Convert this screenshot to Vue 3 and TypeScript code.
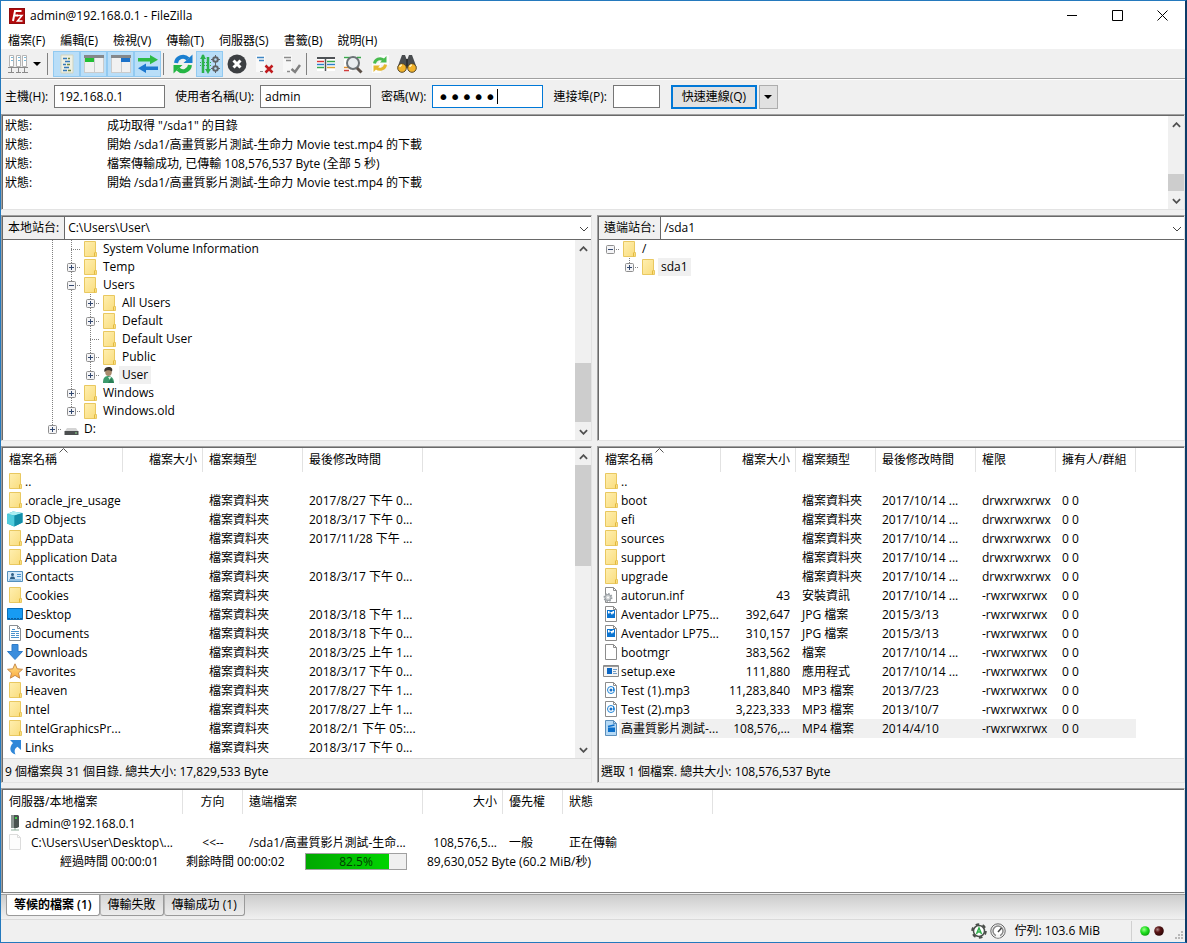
<script setup lang="ts">
import { ref } from 'vue'

interface Column { label: string; width: number; align?: 'right' | 'center'; sorted?: boolean }
interface FileRow { icon: string; cells: string[]; selected?: boolean }
type Guide = 'blank' | 'line' | 'tee' | 'end' | 'root'
interface TreeRow { guides: Guide[]; toggle?: 'plus' | 'minus'; icon: string; label: string; selected?: boolean }

const menus = ['檔案(F)', '編輯(E)', '檢視(V)', '傳輸(T)', '伺服器(S)', '書籤(B)', '說明(H)']

const toolGroups = [
  [
    { icon: 'tb-log', label: '訊息記錄', on: true },
    { icon: 'tb-local', label: '本地目錄樹', on: true },
    { icon: 'tb-remote', label: '遠端目錄樹', on: true },
    { icon: 'tb-queue', label: '傳輸佇列', on: true },
  ],
  [
    { icon: 'tb-refresh', label: '重新整理', on: false },
    { icon: 'tb-process', label: '處理佇列', on: true },
    { icon: 'tb-cancel', label: '取消', on: false },
    { icon: 'tb-disconnect', label: '中斷連線', on: false },
    { icon: 'tb-reconnect', label: '重新連線', on: false },
  ],
  [
    { icon: 'tb-filter', label: '篩選器', on: false },
    { icon: 'tb-compare', label: '目錄比較', on: false },
    { icon: 'tb-sync', label: '同步瀏覽', on: false },
    { icon: 'tb-find', label: '搜尋', on: false },
  ],
]

const host = ref('192.168.0.1')
const user = ref('admin')
const password = ref('admin')
const port = ref('')

const log = [
  '成功取得 "/sda1" 的目錄',
  '開始 /sda1/高畫質影片測試-生命力 Movie test.mp4 的下載',
  '檔案傳輸成功, 已傳輸 108,576,537 Byte (全部 5 秒)',
  '開始 /sda1/高畫質影片測試-生命力 Movie test.mp4 的下載',
]

const localTree: TreeRow[] = [
  { guides: ['line', 'tee'], icon: 'folder', label: 'System Volume Information' },
  { guides: ['line', 'tee'], toggle: 'plus', icon: 'folder', label: 'Temp' },
  { guides: ['line', 'tee'], toggle: 'minus', icon: 'folder', label: 'Users' },
  { guides: ['line', 'line', 'tee'], toggle: 'plus', icon: 'folder', label: 'All Users' },
  { guides: ['line', 'line', 'tee'], toggle: 'plus', icon: 'folder', label: 'Default' },
  { guides: ['line', 'line', 'tee'], icon: 'folder', label: 'Default User' },
  { guides: ['line', 'line', 'tee'], toggle: 'plus', icon: 'folder', label: 'Public' },
  { guides: ['line', 'line', 'end'], toggle: 'plus', icon: 'person', label: 'User', selected: true },
  { guides: ['line', 'tee'], toggle: 'plus', icon: 'folder', label: 'Windows' },
  { guides: ['line', 'end'], toggle: 'plus', icon: 'folder', label: 'Windows.old' },
  { guides: ['end'], toggle: 'plus', icon: 'drive', label: 'D:' },
]
const remoteTree: TreeRow[] = [
  { guides: ['root'], toggle: 'minus', icon: 'folder', label: '/' },
  { guides: ['blank', 'end'], toggle: 'plus', icon: 'folder', label: 'sda1', selected: true },
]

const localColumns: Column[] = [
  { label: '檔案名稱', width: 120, sorted: true },
  { label: '檔案大小', width: 80, align: 'right' },
  { label: '檔案類型', width: 100 },
  { label: '最後修改時間', width: 120 },
]
const dir = '檔案資料夾'
const localFiles: FileRow[] = [
  { icon: 'folder', cells: ['..', '', '', ''] },
  { icon: 'folder', cells: ['.oracle_jre_usage', '', dir, '2017/8/27 下午 0...'] },
  { icon: 'cube', cells: ['3D Objects', '', dir, '2018/3/17 下午 0...'] },
  { icon: 'folder', cells: ['AppData', '', dir, '2017/11/28 下午 ...'] },
  { icon: 'folder', cells: ['Application Data', '', dir, ''] },
  { icon: 'contacts', cells: ['Contacts', '', dir, '2018/3/17 下午 0...'] },
  { icon: 'folder', cells: ['Cookies', '', dir, ''] },
  { icon: 'desktop', cells: ['Desktop', '', dir, '2018/3/18 下午 1...'] },
  { icon: 'document', cells: ['Documents', '', dir, '2018/3/18 下午 0...'] },
  { icon: 'download', cells: ['Downloads', '', dir, '2018/3/25 上午 1...'] },
  { icon: 'star', cells: ['Favorites', '', dir, '2018/3/17 下午 0...'] },
  { icon: 'folder', cells: ['Heaven', '', dir, '2017/8/27 下午 1...'] },
  { icon: 'folder', cells: ['Intel', '', dir, '2017/8/27 上午 1...'] },
  { icon: 'folder', cells: ['IntelGraphicsPr...', '', dir, '2018/2/1 下午 05:...'] },
  { icon: 'link', cells: ['Links', '', dir, '2018/3/17 下午 0...'] },
  { icon: 'folder', cells: ['', '', '', ''] },
]

const remoteColumns: Column[] = [
  { label: '檔案名稱', width: 122, sorted: true },
  { label: '檔案大小', width: 75, align: 'right' },
  { label: '檔案類型', width: 80 },
  { label: '最後修改時間', width: 100 },
  { label: '權限', width: 80 },
  { label: '擁有人/群組', width: 80 },
]
const drwx = 'drwxrwxrwx'
const rwx = '-rwxrwxrwx'
const remoteFiles: FileRow[] = [
  { icon: 'folder', cells: ['..', '', '', '', '', ''] },
  { icon: 'folder', cells: ['boot', '', dir, '2017/10/14 ...', drwx, '0 0'] },
  { icon: 'folder', cells: ['efi', '', dir, '2017/10/14 ...', drwx, '0 0'] },
  { icon: 'folder', cells: ['sources', '', dir, '2017/10/14 ...', drwx, '0 0'] },
  { icon: 'folder', cells: ['support', '', dir, '2017/10/14 ...', drwx, '0 0'] },
  { icon: 'folder', cells: ['upgrade', '', dir, '2017/10/14 ...', drwx, '0 0'] },
  { icon: 'inf', cells: ['autorun.inf', '43', '安裝資訊', '2017/10/14 ...', rwx, '0 0'] },
  { icon: 'jpg', cells: ['Aventador LP75...', '392,647', 'JPG 檔案', '2015/3/13', rwx, '0 0'] },
  { icon: 'jpg', cells: ['Aventador LP75...', '310,157', 'JPG 檔案', '2015/3/13', rwx, '0 0'] },
  { icon: 'file', cells: ['bootmgr', '383,562', '檔案', '2017/10/14 ...', rwx, '0 0'] },
  { icon: 'exe', cells: ['setup.exe', '111,880', '應用程式', '2017/10/14 ...', rwx, '0 0'] },
  { icon: 'mp3', cells: ['Test (1).mp3', '11,283,840', 'MP3 檔案', '2013/7/23', rwx, '0 0'] },
  { icon: 'mp3', cells: ['Test (2).mp3', '3,223,333', 'MP3 檔案', '2013/10/7', rwx, '0 0'] },
  { icon: 'mp4', cells: ['高畫質影片測試-...', '108,576,...', 'MP4 檔案', '2014/4/10', rwx, '0 0'], selected: true },
]

const sites = [
  {
    id: 'local', title: '本地站台:', path: 'C:\\Users\\User\\', tree: localTree, scroll: true,
    columns: localColumns, files: localFiles, status: '9 個檔案與 31 個目錄. 總共大小: 17,829,533 Byte',
  },
  {
    id: 'remote', title: '遠端站台:', path: '/sda1', tree: remoteTree, scroll: false,
    columns: remoteColumns, files: remoteFiles, status: '選取 1 個檔案. 總共大小: 108,576,537 Byte',
  },
]

const queueColumns: Column[] = [
  { label: '伺服器/本地檔案', width: 180 },
  { label: '方向', width: 60, align: 'center' },
  { label: '遠端檔案', width: 180 },
  { label: '大小', width: 80, align: 'right' },
  { label: '優先權', width: 60 },
  { label: '狀態', width: 150 },
]
const progress = 82.5
const tabs = ['等候的檔案 (1)', '傳輸失敗', '傳輸成功 (1)']
const activeTab = ref(0)
</script>

<template>
  <svg class="sprite" aria-hidden="true">
    <defs>
      <linearGradient id="g-folder" x1="0" y1="0" x2="1" y2="1">
        <stop offset="0" stop-color="#ffefb0" /><stop offset="1" stop-color="#f9dc7c" />
      </linearGradient>
      <linearGradient id="g-star" x1="0" y1="0" x2="0" y2="1">
        <stop offset="0" stop-color="#ffe28a" /><stop offset="1" stop-color="#fba93c" />
      </linearGradient>
      <radialGradient id="g-green" cx=".4" cy=".35" r=".7">
        <stop offset="0" stop-color="#9cff8c" /><stop offset=".5" stop-color="#1fe01f" /><stop offset="1" stop-color="#0a9a0a" />
      </radialGradient>
      <radialGradient id="g-red" cx=".35" cy=".35" r=".7">
        <stop offset="0" stop-color="#b08888" /><stop offset=".4" stop-color="#5a1414" /><stop offset="1" stop-color="#2a0505" />
      </radialGradient>
    </defs>
    <symbol id="folder" viewBox="0 0 16 16">
      <path d="M2.500.5h11v11h1v4h-12z" fill="url(#g-folder)" stroke="#e9c860" />
      <path d="M12.500 15.500v-3.500l1-1" fill="none" stroke="#e3b93e" />
    </symbol>
    <symbol id="person" viewBox="0 0 16 16">
      <path d="M2 16c0-4 1-7 5-7s6 3 6 7z" fill="#3c9a6c" />
      <path d="M7 10l2 3 1-3z" fill="#dff0e6" />
      <path d="M7 16l3-5 3 5z" fill="#2b7f57" />
      <ellipse cx="7.500" cy="5" rx="3.300" ry="4" fill="#a98a6c" />
      <path d="M3.500 5C2.500 1 5.500 0 8 0s4 1.500 3 4.500C9 3 7 3 5.500 3.500z" fill="#3a342e" />
    </symbol>
    <symbol id="drive" viewBox="0 0 16 16">
      <path d="M4 7h9l2 3H2z" fill="#d4d4d4" />
      <path d="M1.500 10h14v4h-14z" fill="#4c4f50" />
      <path d="M12 12h2" stroke="#8fe08f" />
    </symbol>
    <symbol id="cube" viewBox="0 0 16 16">
      <path d="M0 3l6-2.500L15.500 2v9.500L7 15.500 0 12.500z" fill="#1aa5bd" />
      <path d="M0 3l6-2.500L15.500 2 7.500 4.500z" fill="#a9eef2" />
      <path d="M0 3l7.500 1.500v11L0 12.500z" fill="#4fcbdc" />
      <path d="M7.500 4.500L15.500 2v9.500l-8 4z" fill="#128da8" />
    </symbol>
    <symbol id="contacts" viewBox="0 0 16 16">
      <path d="M.5 3.500h15v10H.5z" fill="#d5eafa" stroke="#5490bd" />
      <path d="M3 11c0-2 1-2.500 2.500-2.500S8 9 8 11z" fill="#2f5f86" />
      <circle cx="5.500" cy="6.500" r="1.500" fill="#2f5f86" />
      <path d="M10 6.500h4M10 8.500h4M2 12h12" stroke="#4b93cc" />
    </symbol>
    <symbol id="desktop" viewBox="0 0 16 16">
      <path d="M.5 2.500h15v11H.5z" fill="#179bf3" stroke="#0b6fb8" />
      <path d="M1 12.500h14" stroke="#0c5c9c" stroke-dasharray="2 1" />
    </symbol>
    <symbol id="document" viewBox="0 0 16 16">
      <path d="M2.500.5h8l3 3v12h-11z" fill="#fff" stroke="#8a8f94" />
      <path d="M5 4.500h3M4 6.500h8M4 8.500h4M9 8.500h3M4 10.500h4M9 10.500h3M4 12.500h8" stroke="#4a92cc" />
      <path d="M10.500.5v3h3" fill="none" stroke="#8a8f94" />
    </symbol>
    <symbol id="download" viewBox="0 0 16 16">
      <path d="M5 .5h6v7h4.500L8 15.500.5 7.500H5z" fill="#3b8ddd" stroke="#2f7cc9" />
    </symbol>
    <symbol id="star" viewBox="0 0 16 16">
      <path d="M8 .8l2.200 5 5.300.5-4 3.600 1.200 5.300L8 12.400l-4.700 2.800 1.200-5.300-4-3.600 5.300-.5z" fill="url(#g-star)" stroke="#c98a4a" />
    </symbol>
    <symbol id="link" viewBox="0 0 16 16">
      <path d="M3 1h11v10l-3.500-3.200C7.500 9.500 7 12 8.500 15.500 3 14 1.500 9 6 4z" fill="#2f87d8" />
    </symbol>
    <symbol id="file" viewBox="0 0 16 16">
      <path d="M2.500.5h8l3 3v12h-11z" fill="#fff" stroke="#8c8c8c" />
      <path d="M10.500.5v3h3" fill="none" stroke="#8c8c8c" />
    </symbol>
    <symbol id="file-light" viewBox="0 0 16 16">
      <path d="M2.500.5h8l3 3v12h-11z" fill="#fdfdfd" stroke="#dcdcdc" />
      <path d="M10.500.5v3h3" fill="none" stroke="#dcdcdc" />
    </symbol>
    <symbol id="inf" viewBox="0 0 16 16">
      <use href="#file" />
      <circle cx="5" cy="10.500" r="3.500" fill="#d8dbdd" stroke="#9aa0a4" stroke-width="2" stroke-dasharray="1.500 1.200" />
      <circle cx="5" cy="10.500" r="3" fill="#d0d3d5" stroke="#9aa0a4" />
      <circle cx="5" cy="10.500" r="1" fill="#fff" />
    </symbol>
    <symbol id="jpg" viewBox="0 0 16 16">
      <use href="#file" />
      <path d="M4 4h8v8H4z" fill="#0b74d1" />
      <path d="M5 5h6v3l-1-1-1 2-2-3-1 2-1-1z" fill="#fff" />
      <path d="M6.500 5.500h3" stroke="#0b74d1" />
    </symbol>
    <symbol id="exe" viewBox="0 0 16 16">
      <path d="M.5 2.500h15v11H.5z" fill="#f4f4f4" stroke="#8a8a8a" />
      <path d="M1 3.500h14" stroke="#9a9a9a" />
      <path d="M4 5h5v6H4z" fill="#0b66c3" />
      <path d="M10 6.500h4M10 8.500h3M10 10.500h4" stroke="#6f9cc8" />
    </symbol>
    <symbol id="mp3" viewBox="0 0 16 16">
      <use href="#file" />
      <circle cx="8" cy="8" r="3.500" fill="none" stroke="#1c83d8" />
      <circle cx="8" cy="8" r="1.500" fill="#1c6fc4" />
      <path d="M10.500 5v4" stroke="#1c83d8" />
    </symbol>
    <symbol id="mp4" viewBox="0 0 16 16">
      <path d="M2.500.5h8l3 3v12h-11z" fill="#b5d9f5" stroke="#5d8fba" />
      <path d="M10.500.5v3h3" fill="none" stroke="#5d8fba" />
      <path d="M5 7.500h7V12H5z" fill="#0b6fcb" />
      <path d="M5 6.500l6.500-1.500" stroke="#0b6fcb" stroke-width="1.500" />
    </symbol>
    <symbol id="server" viewBox="0 0 16 16">
      <path d="M4 0h7l1 1v11l-2 1H4z" fill="#4a5350" />
      <path d="M4 0h3v13H4z" fill="#8b9591" />
      <path d="M8 2h2v2H8z" fill="#44d04c" />
      <path d="M8 13v2M4 15h8" stroke="#8fae9b" />
    </symbol>
    <symbol id="plus" viewBox="0 0 9 9">
      <rect x=".5" y=".5" width="8" height="8" rx="1" fill="#f4f4f6" stroke="#8f8f8f" />
      <path d="M2 4.500h5M4.500 2v5" stroke="#32486f" />
    </symbol>
    <symbol id="minus" viewBox="0 0 9 9">
      <rect x=".5" y=".5" width="8" height="8" rx="1" fill="#f4f4f6" stroke="#8f8f8f" />
      <path d="M2 4.500h5" stroke="#32486f" />
    </symbol>
    <symbol id="up" viewBox="0 0 10 6"><path d="M1 5l4-4 4 4" fill="none" stroke="#505050" stroke-width="2" /></symbol>
    <symbol id="down" viewBox="0 0 10 6"><path d="M1 1l4 4 4-4" fill="none" stroke="#505050" stroke-width="2" /></symbol>

    <symbol id="tb-sites" viewBox="0 0 20 20">
      <g fill="#fff" stroke="#b4b4b4"><path d="M1.500 1.500h4v11h-4zM8.500 1.500h4v11h-4zM14.500 1.500h4v11h-4z" /></g>
      <path d="M3 3.500h2M10 3.500h2M16 3.500h2M3 6.500h2M10 6.500h2M16 6.500h2" stroke="#7ab8d8" />
      <path d="M0 13.500h20M3.500 13v5M10.500 13v5M16.500 13v5M0 18.500h6M8 18.500h5M14 18.500h6" stroke="#8a8a8a" />
    </symbol>
    <symbol id="tb-log" viewBox="0 0 20 20">
      <path d="M4 1h12v18H4z" fill="#eef0e4" stroke="#d0d4c0" />
      <path d="M6 4.500h4M8 7.500h5M6 10.500h3M7 13.500h5M6 16.500h4" stroke="#3579b8" stroke-width="1.500" />
      <path d="M11 4.500h2M10 10.500h3M11 16.500h3" stroke="#6f8a40" stroke-width="1.500" />
    </symbol>
    <symbol id="tb-local" viewBox="0 0 20 20">
      <path d="M0 1h20v18H0z" fill="#f1f1f1" /><path d="M0 1h20v3H0z" fill="#85888b" />
      <path d="M0 4h10v4H0z" fill="#22bf35" /><path d="M10.500 4v15M.5 4v15M19.500 4v15M0 18.500h20" stroke="#c9cbcc" />
    </symbol>
    <symbol id="tb-remote" viewBox="0 0 20 20">
      <path d="M0 1h20v18H0z" fill="#f1f1f1" /><path d="M0 1h20v3H0z" fill="#85888b" />
      <path d="M10 4h10v4H10z" fill="#1c72c9" /><path d="M10.500 8v11M.5 4v15M19.500 4v15M0 18.500h20" stroke="#c9cbcc" />
    </symbol>
    <symbol id="tb-queue" viewBox="0 0 20 20">
      <path d="M0 4h12V1l8 4.800-8 4.500V7.500H0z" fill="#2dbb45" />
      <path d="M20 12.500H8v-3L0 14.300l8 4.700v-3h12z" fill="#1d78d0" />
    </symbol>
    <symbol id="tb-refresh" viewBox="0 0 20 20">
      <path d="M3 9a7 7 0 0 1 12-4" fill="none" stroke="#1b7fd0" stroke-width="4" />
      <path d="M10.500 9h9V.5z" fill="#1b7fd0" />
      <path d="M17 11a7 7 0 0 1-12 4" fill="none" stroke="#25b645" stroke-width="4" />
      <path d="M9.500 11h-9v8.500z" fill="#25b645" />
    </symbol>
    <symbol id="tb-process" viewBox="0 0 20 20">
      <path d="M3 1v18M8 3v14" stroke="#2bb24c" stroke-width="2.500" />
      <path d="M0 5l3-5 3 5zM5 15l3 5 3-5z" fill="#2bb24c" />
      <path d="M0 8.500h11M0 11.500h11" stroke="#2bb24c" stroke-dasharray="1 1" />
      <g fill="none" stroke="#606468"><circle cx="15.500" cy="5.500" r="2.300" stroke-width="2" /><circle cx="15.500" cy="14.500" r="2.300" stroke-width="2" /><path d="M15.500 1v2M15.500 8v2M11 5.500h2M18 5.500h2M15.500 10v2M15.500 17v2M11 14.500h2M18 14.500h2" /></g>
    </symbol>
    <symbol id="tb-cancel" viewBox="0 0 20 20">
      <circle cx="10" cy="10" r="9.500" fill="#3c3f42" />
      <path d="M6.500 6.500l7 7M13.500 6.500l-7 7" stroke="#fff" stroke-width="3" />
    </symbol>
    <symbol id="tb-disconnect" viewBox="0 0 20 20">
      <path d="M2 1h9v17H2z" fill="#f9f9f9" />
      <path d="M3 3.500h7M5 6.500h5" stroke="#3f86c4" stroke-width="1.500" /><path d="M6 17.500h3" stroke="#8a8a8a" />
      <path d="M11.500 11.500l7 7M18.500 11.500l-7 7" stroke="#c01a1e" stroke-width="2.500" />
    </symbol>
    <symbol id="tb-reconnect" viewBox="0 0 20 20">
      <path d="M2 1h9v17H2z" fill="#f7f7f7" />
      <path d="M3 3.500h7M5 6.500h5M6 17.500h3" stroke="#8b8b8b" stroke-width="1.500" />
      <path d="M10.500 15l3.500 3 5-7" fill="none" stroke="#808080" stroke-width="2.500" />
    </symbol>
    <symbol id="tb-filter" viewBox="0 0 20 20">
      <path d="M1 3h18v14H1z" fill="#fff" /><path d="M1 3h18v2H1z" fill="#4e5256" />
      <path d="M1 7.500h7" stroke="#d93434" stroke-width="1.500" /><path d="M1 10.500h7M11 10.500h8" stroke="#2f7fc9" stroke-width="1.500" />
      <path d="M1 13.500h7M11 7.500h8" stroke="#3aa84c" stroke-width="1.500" /><path d="M11 13.500h8" stroke="#d9a334" stroke-width="1.500" />
      <path d="M9.500 3v14" stroke="#4e5256" stroke-width="1.500" />
    </symbol>
    <symbol id="tb-compare" viewBox="0 0 20 20">
      <path d="M1 2h8v15H1z" fill="#fff" /><path d="M1 3.500h6M14 3.500h4" stroke="#3aa84c" stroke-width="1.500" />
      <path d="M1 13.500h6" stroke="#e2902d" stroke-width="1.500" /><path d="M1 16.500h5" stroke="#d23c3c" stroke-width="1.500" />
      <circle cx="10" cy="9" r="6" fill="#e9edf0" stroke="#6d7377" stroke-width="2" />
      <path d="M14 14l4.500 4.500" stroke="#5b5048" stroke-width="3" />
    </symbol>
    <symbol id="tb-sync" viewBox="0 0 20 20">
      <path d="M9 1h10v10H9zM2 9h9v10H2z" fill="#fbfbfb" />
      <path d="M4.500 9.500a5.500 5.500 0 0 1 9-3.500" fill="none" stroke="#48bb4e" stroke-width="3" /><path d="M10 8.500h6.500V2z" fill="#48bb4e" />
      <path d="M15.500 10.500a5.500 5.500 0 0 1-9 3.500" fill="none" stroke="#e5b72d" stroke-width="3" /><path d="M10 11.500H3.500V18z" fill="#e5b72d" />
    </symbol>
    <symbol id="tb-find" viewBox="0 0 20 20">
      <path d="M5 1h3l1.500 4h1L12 1h3l4.500 12H.5z" fill="#4a4d50" />
      <path d="M9 5h2v9H9z" fill="#2e3032" />
      <circle cx="5" cy="14" r="4.300" fill="#f2b32b" stroke="#5a4a2a" /><circle cx="15" cy="14" r="4.300" fill="#f2b32b" stroke="#5a4a2a" />
      <path d="M3 13a2 2 0 0 1 2-2M13 13a2 2 0 0 1 2-2" fill="none" stroke="#fff2b8" stroke-width="1.500" />
    </symbol>
  </svg>

  <main class="window">
    <header class="titlebar">
      <svg class="logo" viewBox="0 0 16 16" aria-hidden="true">
        <path d="M0 0h16v16H0z" fill="#b30a0c" />
        <path d="M.5.500h15v15H.5z" fill="none" stroke="#6d0f10" stroke-dasharray="1 1" />
        <path d="M4 13L6 3h6.500M5 7.500h4" fill="none" stroke="#fff" stroke-width="2" />
        <path d="M8 7.500h5L8.500 13h5" fill="none" stroke="#fff" stroke-width="1.500" />
      </svg>
      <h1>admin@192.168.0.1 - FileZilla</h1>
      <div class="captions">
        <button type="button" aria-label="最小化"><svg viewBox="0 0 11 11"><path d="M0 5.500h10" stroke="#000" /></svg></button>
        <button type="button" aria-label="最大化"><svg viewBox="0 0 11 11"><path d="M.5.500h10v10H.5z" fill="none" stroke="#000" /></svg></button>
        <button type="button" aria-label="關閉"><svg viewBox="0 0 11 11"><path d="M.5.500l10 10M10.500.500l-10 10" stroke="#000" /></svg></button>
      </div>
    </header>

    <nav class="menubar">
      <button v-for="m in menus" :key="m" type="button">{{ m }}</button>
    </nav>

    <div class="toolbar">
      <button type="button" class="tool" aria-label="站台管理員"><svg><use href="#tb-sites" /></svg></button>
      <button type="button" class="tool-more" aria-label="站台清單"><svg viewBox="0 0 8 4"><path d="M0 0h8L4 4z" /></svg></button>
      <template v-for="(group, g) in toolGroups" :key="g">
        <span class="tool-sep"></span>
        <button v-for="t in group" :key="t.icon" type="button" class="tool" :class="{ on: t.on }" :aria-label="t.label" :aria-pressed="t.on">
          <svg><use :href="'#' + t.icon" /></svg>
        </button>
      </template>
    </div>

    <form class="quick" @submit.prevent>
      <label for="host">主機(H):</label>
      <input id="host" v-model="host" type="text">
      <label for="user">使用者名稱(U):</label>
      <input id="user" v-model="user" type="text">
      <label for="pass">密碼(W):</label>
      <span class="pass"><input id="pass" v-model="password" type="password"><i class="caret"></i></span>
      <label for="port">連接埠(P):</label>
      <input id="port" v-model="port" class="port" type="text">
      <button type="submit" class="connect">快速連線(Q)</button>
      <button type="button" class="history" aria-label="連線記錄"><svg viewBox="0 0 8 4"><path d="M0 0h8L4 4z" /></svg></button>
    </form>

    <div class="panes">
      <section class="pane log" aria-label="訊息記錄">
        <dl>
          <div v-for="(line, i) in log" :key="i"><dt>狀態:</dt><dd>{{ line }}</dd></div>
        </dl>
        <div class="scroll scroll-log"><svg><use href="#up" /></svg><i class="before"></i><b></b><i class="after"></i><svg><use href="#down" /></svg></div>
      </section>

      <div class="split">
        <section v-for="s in sites" :key="s.id" class="pane site">
          <div class="path">
            <label :for="s.id + '-path'">{{ s.title }}</label>
            <select :id="s.id + '-path'"><option>{{ s.path }}</option></select>
            <svg viewBox="0 0 10 6" aria-hidden="true"><path d="M1 1l4 4 4-4" fill="none" stroke="#444" /></svg>
          </div>
          <div class="tree-area">
            <ul class="tree" :class="s.id">
              <li v-for="row in s.tree" :key="row.label">
                <span v-for="(kind, k) in row.guides" :key="k" class="guide" :class="kind">
                  <button v-if="row.toggle && k === row.guides.length - 1" type="button" :aria-label="row.label">
                    <svg><use :href="'#' + row.toggle" /></svg>
                  </button>
                </span>
                <svg class="icon"><use :href="'#' + row.icon" /></svg>
                <span class="node" :class="{ selected: row.selected }">{{ row.label }}</span>
              </li>
            </ul>
            <div v-if="s.scroll" class="scroll scroll-tree"><svg><use href="#up" /></svg><i class="before"></i><b></b><i class="after"></i><svg><use href="#down" /></svg></div>
          </div>
        </section>
      </div>

      <div class="split">
        <section v-for="s in sites" :key="s.id" class="pane listing">
          <div class="list-area">
            <div class="list-clip">
              <table>
                <colgroup><col v-for="c in s.columns" :key="c.label" :style="{ width: c.width + 'px' }"></colgroup>
                <thead>
                  <tr>
                    <th v-for="c in s.columns" :key="c.label" :class="c.align" scope="col">
                      {{ c.label }}<svg v-if="c.sorted" class="sort" viewBox="0 0 9 5"><path d="M.5 4.500l4-4 4 4" fill="none" stroke="#555" /></svg>
                    </th>
                  </tr>
                </thead>
                <tbody>
                  <tr v-for="(f, i) in s.files" :key="i" :class="{ selected: f.selected }">
                    <td v-for="(c, k) in f.cells" :key="k" :class="[s.columns[k].align, { name: k === 0 }]">
                      <template v-if="k === 0"><svg class="icon"><use :href="'#' + f.icon" /></svg><span>{{ c }}</span></template>
                      <template v-else>{{ c }}</template>
                    </td>
                  </tr>
                </tbody>
              </table>
            </div>
            <div v-if="s.scroll" class="scroll scroll-list"><svg><use href="#up" /></svg><i class="before"></i><b></b><i class="after"></i><svg><use href="#down" /></svg></div>
          </div>
          <p class="summary">{{ s.status }}</p>
        </section>
      </div>

      <section class="pane queue" aria-label="傳輸佇列">
        <table>
          <colgroup><col v-for="c in queueColumns" :key="c.label" :style="{ width: c.width + 'px' }"></colgroup>
          <thead>
            <tr><th v-for="c in queueColumns" :key="c.label" :class="c.align" scope="col">{{ c.label }}</th></tr>
          </thead>
          <tbody>
            <tr>
              <td class="name" colspan="6"><svg class="icon"><use href="#server" /></svg><span>admin@192.168.0.1</span></td>
            </tr>
            <tr>
              <td class="name child"><svg class="icon"><use href="#file-light" /></svg><span>C:\Users\User\Desktop\...</span></td>
              <td class="center">&lt;&lt;--</td>
              <td>/sda1/高畫質影片測試-生命...</td>
              <td class="right">108,576,5...</td>
              <td>一般</td>
              <td>正在傳輸</td>
            </tr>
            <tr>
              <td class="transfer" colspan="6">
                <div>
                  <span class="elapsed">經過時間 00:00:01</span>
                  <span class="remaining">剩餘時間 00:00:02</span>
                  <span class="meter" role="progressbar" :aria-valuenow="progress"><i :style="{ width: progress + '%' }"></i><em>{{ progress }}%</em></span>
                  <span>89,630,052 Byte (60.2 MiB/秒)</span>
                </div>
              </td>
            </tr>
          </tbody>
        </table>
      </section>
    </div>

    <div class="tabs" role="tablist">
      <button v-for="(t, i) in tabs" :key="t" type="button" role="tab" :aria-selected="i === activeTab" :class="{ active: i === activeTab }" @click="activeTab = i">{{ t }}</button>
    </div>

    <footer class="statusbar">
      <svg class="badge" viewBox="0 0 16 16" aria-hidden="true">
        <circle cx="8" cy="8" r="6.800" fill="none" stroke="#4b4f4b" stroke-width="2" stroke-dasharray="3.560 3.560" />
        <circle cx="8" cy="8" r="5.500" fill="#fff" stroke="#4b4f4b" stroke-width="1.500" />
        <path d="M5.500 11L8 5l2.500 6M6.500 9h3" fill="none" stroke="#2fae4a" stroke-width="1.500" />
      </svg>
      <svg class="badge" viewBox="0 0 16 16" aria-hidden="true">
        <circle cx="8" cy="8" r="7.200" fill="#f4f4f4" stroke="#666" />
        <circle cx="8" cy="8" r="5" fill="#fff" stroke="#888" stroke-width="1.500" />
        <path d="M8 9l3.500-4" stroke="#444" stroke-width="1.500" /><path d="M6 13h4" stroke="#f4f4f4" stroke-width="3" />
      </svg>
      <span class="queue-size">佇列: 103.6 MiB</span>
      <span class="lights">
        <svg viewBox="0 0 10 10"><circle cx="5" cy="5" r="4.800" fill="url(#g-green)" /></svg>
        <svg viewBox="0 0 10 10"><circle cx="5" cy="5" r="4.800" fill="url(#g-red)" /></svg>
      </span>
      <svg class="grip" viewBox="0 0 9 9" aria-hidden="true">
        <path d="M6 0h2v2H6zM3 3h2v2H3zM6 3h2v2H6zM0 6h2v2H0zM3 6h2v2H3zM6 6h2v2H6z" fill="#b8b8b8" />
      </svg>
    </footer>
  </main>
</template>

<style>
body {
  margin: 0;
}
</style>

<style scoped>
.sprite {
  position: absolute;
  width: 0;
  height: 0;
}
.window {
  box-sizing: border-box;
  height: 100vh;
  display: flex;
  flex-direction: column;
  overflow: hidden;
  border: 1px solid #2479bd;
  border-right: 2px solid #0d3c69;
  background: #f0f0f0;
  color: #000;
  font: 12px/18px "Open Sans", "Noto Sans CJK TC", sans-serif;
}
button,
input,
select {
  box-sizing: border-box;
  margin: 0;
  padding: 0;
  border: 0;
  border-radius: 0;
  background: none;
  color: inherit;
  font: inherit;
}
h1,
p,
dl,
dd,
ul {
  margin: 0;
  padding: 0;
  font: inherit;
}
svg {
  display: block;
  flex: none;
}
.icon {
  width: 16px;
  height: 16px;
}

.titlebar {
  flex: none;
  height: 29px;
  display: flex;
  align-items: center;
  background: #fff;
}
.logo {
  width: 16px;
  height: 16px;
  margin: 0 5px 0 8px;
}
.captions {
  display: flex;
  margin-left: auto;
}
.captions button {
  width: 45px;
  height: 29px;
  display: grid;
  place-items: center;
}
.captions svg {
  width: 11px;
  height: 11px;
}

.menubar {
  flex: none;
  box-sizing: border-box;
  height: 19px;
  display: flex;
  gap: 15px;
  padding: 2px 0 0 7px;
  background: #fff;
}

.toolbar {
  flex: none;
  height: 29px;
  display: flex;
  align-items: center;
  padding-left: 3px;
  border-bottom: 1px solid #a0a0a0;
  box-shadow: 0 1px 0 #fff;
}
.tool {
  width: 27px;
  height: 26px;
  display: grid;
  place-items: center;
}
.tool svg {
  width: 20px;
  height: 20px;
}
.tool.on {
  background: #b9def8;
  border: 1px solid #92caf1;
}
.tool-more {
  width: 12px;
  height: 26px;
  display: grid;
  place-items: center;
}
.tool-more svg,
.history svg {
  width: 8px;
  height: 4px;
}
.tool-sep {
  width: 1px;
  height: 22px;
  margin: 0 5px 0 2px;
  background: #808080;
}
.tool-more + .tool-sep {
  margin: 0 5px 0 4px;
}

.quick {
  flex: none;
  height: 35px;
  display: flex;
  align-items: center;
  padding-left: 4px;
}
.quick label {
  margin-right: 6px;
}
.quick input {
  width: 111px;
  height: 23px;
  margin-right: 10px;
  padding: 0 4px;
  border: 1px solid #767676;
  background: #fff;
}
.quick .port {
  width: 47px;
  margin-right: 11px;
}
.pass {
  position: relative;
}
.quick .pass input {
  display: block;
  border: 1px solid #0078d7;
  font: 20px/20px "DejaVu Sans", sans-serif;
}
.caret {
  position: absolute;
  top: 4px;
  left: 65px;
  width: 1px;
  height: 15px;
  background: #000;
}
.connect {
  width: 86px;
  height: 24px;
}
.quick .connect {
  border: 2px solid #0078d7;
  background: #e1e1e1;
}
.quick .history {
  width: 19px;
  height: 24px;
  display: grid;
  place-items: center;
  margin-left: 2px;
  border: 1px solid #adadad;
  background: #e1e1e1;
}

.panes {
  flex: 1;
  min-height: 0;
  display: grid;
  gap: 5px;
  grid-template-rows: minmax(0, 96fr) minmax(0, 226fr) minmax(0, 337fr) minmax(0, 105fr);
}
.split {
  display: grid;
  gap: 5px;
  grid-template-columns: minmax(0, 591fr) minmax(0, 588fr);
  min-height: 0;
}
.pane {
  box-sizing: border-box;
  min-height: 0;
  overflow: hidden;
  display: flex;
  flex-direction: column;
  padding: 1px 0 0 1px;
  border: 1px solid #a0a0a0;
  border-right-color: #e3e3e3;
  border-bottom-color: #e3e3e3;
  background: #fff;
  box-shadow: inset 1px 1px 0 #696969;
}
.log {
  flex-direction: row;
  line-height: 19px;
}
.log dl {
  flex: 1;
  padding-left: 2px;
}
.log dl div {
  display: flex;
}
.log dt {
  width: 102px;
}

.scroll {
  flex: none;
  width: 16px;
  display: flex;
  flex-direction: column;
  align-items: center;
  background: #f0f0f0;
}
.scroll svg {
  width: 9px;
  height: 6px;
  margin: 6px 0 5px;
}
.scroll b {
  width: 100%;
  background: #cdcdcd;
}
.scroll-log .before { flex: 42; }
.scroll-log b { flex: 17; }
.scroll-log .after { flex: 1; }
.scroll-tree .before { flex: 107; }
.scroll-tree b { flex: 59; }
.scroll-tree .after { flex: 1; }
.scroll-list .before { flex: 0; }
.scroll-list b { flex: 101; }
.scroll-list .after { flex: 176; }

.path {
  position: relative;
  flex: none;
  height: 22px;
  display: flex;
  border-bottom: 1px solid #696969;
}
.path label {
  padding: 1px 5px 0 5px;
  border-right: 1px solid #696969;
  background: #f0f0f0;
  line-height: 20px;
}
.path select {
  flex: 1;
  appearance: none;
  padding-left: 3px;
}
.path svg {
  position: absolute;
  right: 2px;
  top: 9px;
  width: 10px;
  height: 6px;
  pointer-events: none;
}
.tree-area,
.list-area {
  flex: 1;
  min-height: 0;
  display: flex;
}
.tree {
  flex: 1;
  overflow: hidden;
  list-style: none;
}
.tree.local {
  padding-left: 40px;
}
.tree.remote {
  padding-left: 2px;
}
.tree li {
  height: 18px;
  display: flex;
  align-items: center;
}
.tree .icon {
  margin: 0 2px 0 1px;
}
.guide {
  width: 19px;
  height: 18px;
  display: flex;
  align-items: center;
  padding: 1px 0 0 5px;
  box-sizing: border-box;
  background-repeat: no-repeat;
}
.guide button,
.guide svg {
  width: 9px;
  height: 9px;
}
.guide.line,
.guide.tee,
.guide.end {
  --v: repeating-linear-gradient(180deg, #808080 0 1px, transparent 1px 2px);
  --h: repeating-linear-gradient(90deg, #808080 0 1px, transparent 1px 2px);
}
.guide.root {
  background-image: repeating-linear-gradient(90deg, #808080 0 1px, transparent 1px 2px);
  background-size: 10px 1px;
  background-position: 9px 9px;
}
.guide.line {
  background-image: var(--v);
  background-size: 1px 18px;
  background-position: 9px 0;
}
.guide.tee {
  background-image: var(--v), var(--h);
  background-size: 1px 18px, 10px 1px;
  background-position: 9px 0, 9px 9px;
}
.guide.end {
  background-image: var(--v), var(--h);
  background-size: 1px 9px, 10px 1px;
  background-position: 9px 0, 9px 9px;
}
.node {
  padding: 0 3px;
}
.node.selected {
  background: #f0f0f0;
}

.list-clip {
  flex: 1;
  overflow: hidden;
}
table {
  width: 0;
  border-collapse: separate;
  border-spacing: 0;
  table-layout: fixed;
}
th {
  position: relative;
  height: 24px;
  padding: 0 5px 0 6px;
  border-right: 1px solid #e2e2e2;
  font-weight: 400;
  text-align: left;
  white-space: nowrap;
  box-sizing: border-box;
}
td {
  height: 19px;
  padding: 0 0 0 6px;
  line-height: 19px;
  white-space: nowrap;
  overflow: hidden;
  box-sizing: border-box;
}
.right {
  padding: 0 6px 0 0;
  text-align: right;
}
th.right {
  padding-right: 5px;
}
.center {
  padding: 0;
  text-align: center;
}
td.name {
  padding-left: 4px;
}
.name .icon {
  float: left;
  margin: 1px 2px 0 0;
}
.name.child span {
  padding-left: 6px;
}
.sort {
  position: absolute;
  top: 0;
  left: 56px;
  width: 9px;
  height: 5px;
}
tr.selected td {
  background: #f0f0f0;
}
tr.selected td.name {
  background: linear-gradient(90deg, #fff 20px, #f0f0f0 20px);
}
.summary {
  flex: none;
  height: 24px;
  padding-left: 2px;
  border-top: 1px solid #dcdcdc;
  background: #f0f0f0;
  line-height: 26px;
  box-sizing: border-box;
}

.transfer div {
  display: flex;
  align-items: center;
  padding-left: 51px;
}
.elapsed,
.remaining {
  flex: none;
  width: 126px;
}
.remaining {
  width: 119px;
}
.meter {
  position: relative;
  box-sizing: border-box;
  width: 102px;
  height: 17px;
  margin-right: 20px;
  border: 1px solid #a0a0a0;
  background: #f0f0f0;
  line-height: 15px;
  text-align: center;
}
.meter i {
  position: absolute;
  inset: 0 auto 0 0;
  background: linear-gradient(90deg, #00a800, #00d400);
}
.meter em {
  position: relative;
  color: #003c00;
  font-style: normal;
}
.queue {
  border-bottom-color: #828282;
}

.tabs {
  flex: none;
  height: 24px;
  display: flex;
  align-items: flex-start;
  margin-top: 1px;
  padding-left: 5px;
  border-top: 1px solid #a0a0a0;
  background: linear-gradient(#cccccc, #f0f0f0);
}
.tabs button {
  height: 21px;
  padding: 0 7px;
  border: 1px solid #9a9a9a;
  border-top: 0;
  border-radius: 0 0 3px 3px;
  background: linear-gradient(#d6d6d6, #ececec);
  line-height: 18px;
}
.tabs button + button {
  border-left-color: #b4b4b4;
}
.tabs .active {
  background: #fff;
  font-weight: 600;
}

.statusbar {
  flex: none;
  height: 23px;
  display: flex;
  align-items: center;
  justify-content: flex-end;
  border-top: 1px solid #dadada;
  box-sizing: border-box;
}
.badge {
  width: 16px;
  height: 16px;
  margin-right: 3px;
}
.queue-size {
  margin: 0 31px 0 5px;
}
.lights {
  display: flex;
  align-items: center;
  gap: 4px;
  height: 20px;
  padding: 0 11px 0 8px;
  border-left: 1px solid #d0d0d0;
}
.lights svg {
  width: 10px;
  height: 10px;
}
.grip {
  align-self: flex-end;
  width: 9px;
  height: 9px;
  margin: 0 1px 2px 0;
}
</style>
